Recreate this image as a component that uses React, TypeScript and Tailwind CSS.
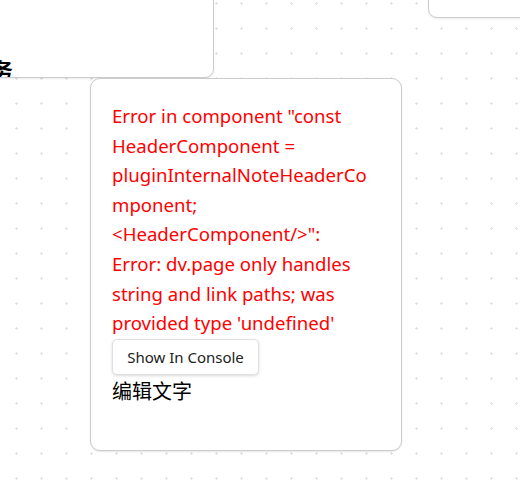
const errorLines = [
  'Error in component "const',
  "HeaderComponent =",
  "pluginInternalNoteHeaderCo",
  "mponent;",
  '<HeaderComponent/>":',
  "Error: dv.page only handles",
  "string and link paths; was",
  "provided type 'undefined'",
];

export default function App() {
  return (
    <div
      className="relative h-[500px] w-[520px] overflow-hidden bg-white bg-[radial-gradient(circle,#e2e2e2_1px,transparent_1.4px)] bg-[size:25px_25px] bg-[position:4px_-9px]"
      style={{ fontFamily: '"Noto Sans", "Noto Sans CJK SC", sans-serif' }}
    >
      {/* card partly off the top-left */}
      <div className="absolute left-[-200px] top-[-100px] h-[178px] w-[414px] overflow-hidden rounded-[9px] border border-[#cccccc] bg-white shadow-[0_1px_2px_rgba(0,0,0,0.08)]">
        <span className="absolute bottom-[-4px] right-[200px] text-[21px] font-bold leading-none text-black">
          任务
        </span>
      </div>

      {/* card partly off the top-right */}
      <div className="absolute left-[428px] top-[-100px] h-[118px] w-[200px] rounded-[9px] border border-[#cccccc] bg-white shadow-[0_1px_2px_rgba(0,0,0,0.08)]" />

      {/* error card */}
      <div className="absolute left-[90px] top-[78px] h-[373px] w-[312px] rounded-[10px] border border-[#cccccc] bg-white px-[21px] pt-[22px] shadow-[0_1px_2px_rgba(0,0,0,0.1)]">
        <div className="text-[18.6px] leading-[29.6px] text-[#ff0000]">
          {errorLines.map((line) => (
            <div key={line} className="whitespace-nowrap">
              {line}
            </div>
          ))}
        </div>
        <button className="mt-[1px] h-[36px] w-[147px] rounded-[5px] border border-[#e0e0e0] bg-white text-[15px] text-[#222] shadow-[0_1px_3px_rgba(0,0,0,0.15)]">
          Show In Console
        </button>
        <div className="mt-[2px] text-[20px] leading-[30px] text-black">
          编辑文字
        </div>
      </div>
    </div>
  );
}
